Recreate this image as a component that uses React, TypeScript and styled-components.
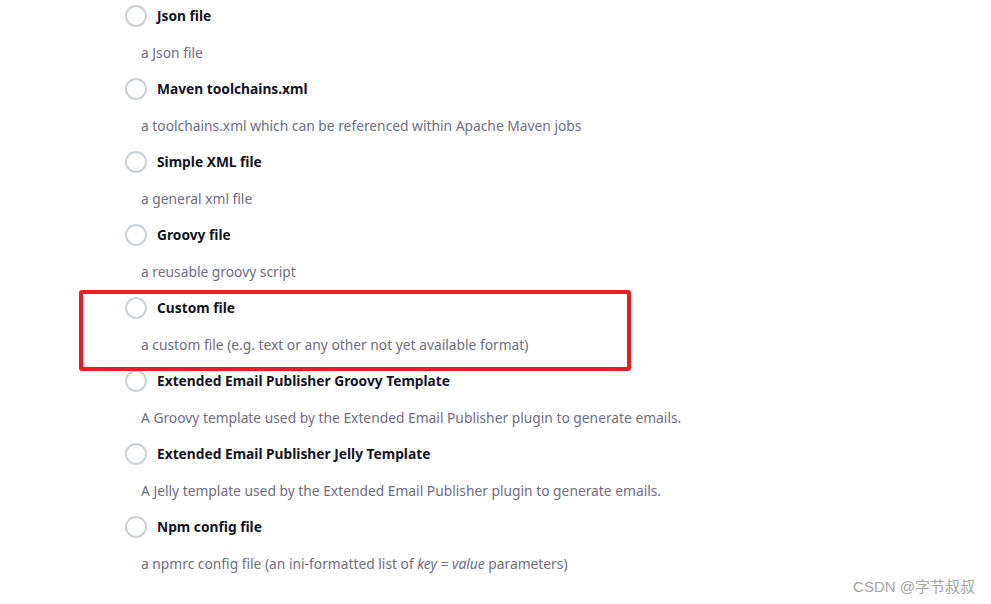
import styled, { createGlobalStyle } from "styled-components";

const GlobalStyle = createGlobalStyle`
  body {
    margin: 0;
    background: #ffffff;
    font-family: "Noto Sans", "Open Sans", sans-serif;
  }
`;

const Page = styled.div`
  position: relative;
  width: 991px;
  height: 604px;
  overflow: hidden;
  background: #ffffff;
`;

const List = styled.div`
  display: flex;
  flex-direction: column;
  padding: 4px 0 0 125px;
`;

const Item = styled.div`
  display: flex;
  flex-direction: column;
  height: 73px;
`;

const Header = styled.label`
  display: flex;
  align-items: center;
  gap: 10px;
  height: 23px;
`;

const Radio = styled.span`
  box-sizing: border-box;
  width: 22px;
  height: 22px;
  border-radius: 50%;
  border: 2px solid #c9d1d6;
  flex-shrink: 0;
`;

const Title = styled.span`
  font-size: 13.75px;
  font-weight: 700;
  color: #14141f;
`;

const Description = styled.div`
  margin: 16px 0 0 16px;
  font-size: 13.8px;
  color: #6f6c82;
  line-height: 20px;
`;

const Highlight = styled.div`
  position: absolute;
  left: 79px;
  top: 290px;
  width: 552px;
  height: 81px;
  box-sizing: border-box;
  border: 4px solid #ec1c24;
  border-radius: 3px;
`;

const Watermark = styled.div`
  position: absolute;
  right: 16px;
  bottom: 8px;
  font-family: "Liberation Sans", "Noto Sans CJK SC", sans-serif;
  font-size: 15px;
  color: #a3a3a3;
`;

const items = [
  { title: "Json file", desc: "a Json file" },
  { title: "Maven toolchains.xml", desc: "a toolchains.xml which can be referenced within Apache Maven jobs" },
  { title: "Simple XML file", desc: "a general xml file" },
  { title: "Groovy file", desc: "a reusable groovy script" },
  { title: "Custom file", desc: "a custom file (e.g. text or any other not yet available format)" },
  { title: "Extended Email Publisher Groovy Template", desc: "A Groovy template used by the Extended Email Publisher plugin to generate emails." },
  { title: "Extended Email Publisher Jelly Template", desc: "A Jelly template used by the Extended Email Publisher plugin to generate emails." },
];

export default function App() {
  return (
    <Page>
      <GlobalStyle />
      <List>
        {items.map((item) => (
          <Item key={item.title}>
            <Header>
              <Radio />
              <Title>{item.title}</Title>
            </Header>
            <Description>{item.desc}</Description>
          </Item>
        ))}
        <Item>
          <Header>
            <Radio />
            <Title>Npm config file</Title>
          </Header>
          <Description>
            a npmrc config file (an ini-formatted list of <i>key = value</i> parameters)
          </Description>
        </Item>
      </List>
      <Highlight />
      <Watermark>CSDN @字节叔叔</Watermark>
    </Page>
  );
}
